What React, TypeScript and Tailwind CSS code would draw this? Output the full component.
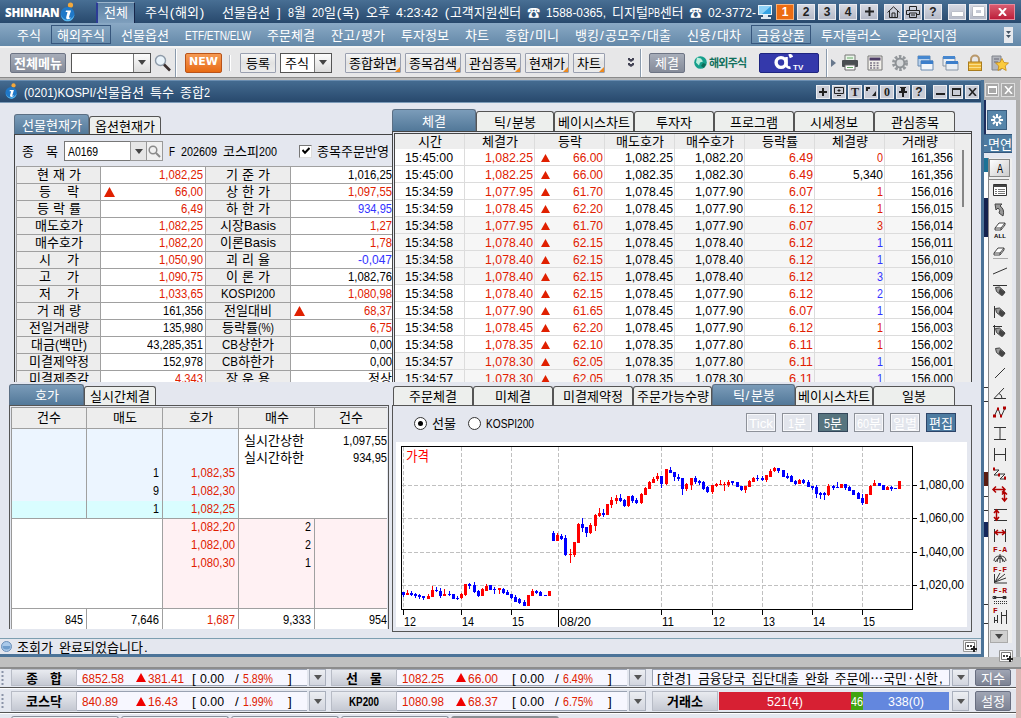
import React from "react";

const measureCtx = document.createElement("canvas").getContext("2d")!;

function naturalWidth(text: string, size: number, family: string, bold: boolean) {
  measureCtx.font = `${bold ? "bold " : ""}${size}px "${family}"`;
  return measureCtx.measureText(text).width;
}

function cellWidth(text: string, prop: boolean) {
  let w = 0;
  for (const ch of text) {
    if (ch.charCodeAt(0) > 0x7e && ch !== "·") w += 12;
    else if (!prop) w += 6;
    else if (",. ():;I".includes(ch)) w += 4;
    else if (/[A-Z%]/.test(ch)) w += 8;
    else w += 6;
  }
  return w;
}

type TProps = { children: string; prop?: boolean; bold?: boolean; className?: string };

/** Fixed-pitch label: full-width characters take 12px, half-width ones 6px. */
function T({ children, prop = false, bold = false, className = "" }: TProps) {
  const runs = children.match(/[^\x21-\x7e]+|[\x21-\x7e]+/g) || [];
  return (
    <span className={`inline-flex h-[14px] shrink-0 items-baseline pb-[2px] leading-[12px] whitespace-pre ${bold ? "font-bold" : ""} ${className}`}>
      {runs.map((r, i) => {
        const wide = !/[\x21-\x7e]/.test(r);
        const target = cellWidth(r, prop);
        const spaces = (r.match(/ /g) || []).length;
        const nat = wide
          ? naturalWidth(r, 13, "Noto Sans CJK KR", bold) + spaces * (prop ? 1.1 : 3.1)
          : naturalWidth(r, 13.5, "Liberation Sans", bold);
        const scale = wide ? target / nat : Math.min(1, target / nat);
        const cls = wide
          ? `text-[13px] font-['Noto_Sans_CJK_KR',sans-serif] ${prop ? "[word-spacing:1.1px]" : "[word-spacing:3.1px]"}`
          : "text-[13.5px] font-['Liberation_Sans',sans-serif]";
        return (
          <span key={i} className="inline-block" style={{ width: target }}>
            <span className={`inline-block origin-left leading-[12px] ${cls}`} style={{ transform: `scaleX(${scale})`, marginLeft: Math.max(0, (target - nat * scale) / 2) }}>
              {r}
            </span>
          </span>
        );
      })}
    </span>
  );
}

const RED = "text-[#e02000]";
const BLUE = "text-[#3333ff]";

function Up({ className = "" }: { className?: string }) {
  return (
    <svg className={`shrink-0 ${className}`} width="11" height="10" viewBox="0 0 11 10">
      <path d="M5.5 0L11 10H0z" fill="#e02000" />
    </svg>
  );
}

function Down({ color = "#444" }: { color?: string }) {
  return (
    <svg width="8" height="5" viewBox="0 0 8 5">
      <path d="M0 0h8L4 5z" fill={color} />
    </svg>
  );
}

function Info({ size }: { size: number }) {
  return (
    <svg width={size} height={size * 1.25} viewBox="0 0 16 20">
      <circle cx="10.5" cy="3" r="2.6" fill="#f3a83b" />
      <circle cx="7.5" cy="12" r="7" fill="#1f78c8" />
      <path d="M1 13c2 6 10 7 13.500-.5C13 22 2 21 1 13z" fill="#59b7ee" />
      <path d="M6 8.500h5L9 15c0 1 1 1 2 .2-.8 2.300-5.300 3-4.800 0L7.500 10H5.600z" fill="#fff" />
    </svg>
  );
}

/* ---------- application title ---------- */

function TopBtn({ children, className = "w-[18px]" }: { children: React.ReactNode; className?: string }) {
  return (
    <div className={`flex h-4 shrink-0 items-center justify-center border border-[#e8eaf0] bg-linear-to-b from-[#d6d9e2] to-[#b5bac8] font-['Liberation_Sans',sans-serif] text-[12px] leading-none font-bold text-[#222] ${className}`}>
      {children}
    </div>
  );
}

function TitleBar() {
  return (
    <div className="flex h-[23px] shrink-0 items-center bg-linear-to-b from-[#486f94] to-[#28496d] text-white">
      <div className="flex w-[96px] items-center pl-[5px]">
        <span className="inline-block w-[55px] pt-[3px] font-['Open_Sans',sans-serif] text-[11.500px] leading-none font-extrabold tracking-[-0.2px]">SHINHAN</span>
        <Info size={16} />
      </div>
      <div className="mt-[2px] flex h-[21px] w-[39px] items-center justify-center border-l-2 border-r border-t border-l-[#2c3b96] border-r-[#17264a] border-t-[#9bb5cc] bg-linear-to-b from-[#5b80a3] to-[#7f9fbd]">
        <T className="-mt-[3px]">전체</T>
      </div>
      <T className="ml-[10px]">주식(해외)</T>
      <T className="ml-[17px]">선물옵션 ] 8월 20일(목) 오후 4:23:42 (고객지원센터 ☎ 1588-0365, 디지털PB센터 ☎ 02-3772-</T>
      <svg className="ml-px" width="17" height="16" viewBox="0 0 17 16">
        <rect x="1" y="1" width="14" height="10" fill="#e9f4fb" />
        <rect x="2" y="2" width="12" height="8" fill="#35a3e4" />
        <path d="M2 2h12L5 10H2z" fill="#8fd2f7" />
        <path d="M6 11h5v2h3v2H4v-2h2z" fill="#dfe9f2" />
      </svg>
      <div className="ml-[2px] flex h-4 w-[18px] items-center justify-center border border-[#f7b27a] bg-[#ec6c12] font-['Liberation_Sans',sans-serif] text-[12px] font-bold">1</div>
      <TopBtn className="ml-[3px] w-[18px]">2</TopBtn>
      <TopBtn className="ml-[3px] w-[18px]">3</TopBtn>
      <TopBtn className="ml-[3px] w-[18px]">4</TopBtn>
      <TopBtn className="ml-[3px] w-[18px]">
        <svg width="9" height="9"><path d="M0 3.500h9v2H0zM3.500 0h2v9h-2z" fill="#222" /></svg>
      </TopBtn>
      <TopBtn className="ml-[6px] w-[18px]">
        <svg width="13" height="12" viewBox="0 0 13 12" fill="none" stroke="#222"><path d="M.5 6.500L6.500.8l6 5.700M2.500 5v6.500h8V5M5 11V7h3v4" /></svg>
      </TopBtn>
      <TopBtn className="ml-[2px] w-[18px]">
        <svg width="14" height="12" viewBox="0 0 14 12" fill="none" stroke="#222"><path d="M3.500 4V.5h7V4M3 8.500H.5v-4h13v4H11M3.500 7h7v4.500h-7zM5 9h4" /></svg>
      </TopBtn>
      <TopBtn className="ml-[2px] w-[18px]">?</TopBtn>
      <TopBtn className="ml-[6px] w-[18px]"><span className="mt-[4px] h-[4px] w-[11px] bg-white shadow-[0_0_1px_#666]" /></TopBtn>
      <TopBtn className="ml-[3px] w-[18px]"><span className="h-[9px] w-[11px] border-[3px] border-white shadow-[0_0_1px_#666]" /></TopBtn>
      <div className="ml-[2px] flex h-4 w-[26px] items-center justify-center border border-[#e58a9b] bg-linear-to-b from-[#d85a70] to-[#bd1b3b]">
        <svg width="9" height="8" viewBox="0 0 9 8"><path d="M1 0l7 8M8 0L1 8" stroke="#fff" strokeWidth="2" /></svg>
      </div>
    </div>
  );
}

function MenuBar() {
  const items = ["주식", "*해외주식", "선물옵션", "ETF/ETN/ELW", "주문체결", "잔고/평가", "투자정보", "차트", "종합/미니", "뱅킹/공모주/대출", "신용/대차", "*금융상품", "투자플러스", "온라인지점"];
  return (
    <div className="flex h-[23px] shrink-0 items-center gap-4 bg-linear-to-b from-[#8aa9c5] to-[#6388a8] pl-[17px] text-white">
      {items.map((m) =>
        m[0] === "*" ? (
          <div key={m} className="-mx-[6px] flex h-[19px] items-center border border-[#36567c] px-[5px]"><T>{m.slice(1)}</T></div>
        ) : (
          <T key={m}>{m}</T>
        ),
      )}
      <div className="ml-[31px] flex h-[16px] w-[9px] items-center justify-center bg-[#e6e9ee]">
        <svg width="5" height="9" viewBox="0 0 5 9"><path d="M0 1h5L2.500 4zM0 5h5L2.500 8z" fill="#456" /></svg>
      </div>
    </div>
  );
}

function Divider({ className = "" }: { className?: string }) {
  return <div className={`h-[28px] w-[2px] shrink-0 border-l border-[#8a9aac] bg-white ${className}`} />;
}

function ToolBtn({ label, className = "", corner = false }: { label: string; className?: string; corner?: boolean }) {
  return (
    <div className={`relative flex h-[20px] shrink-0 items-center justify-center rounded-[1px] border border-[#9aa0b0] bg-linear-to-b from-[#f6f6f6] via-[#e2e2e2] to-[#ececec] text-black ${className}`}>
      <T>{label}</T>
      {corner && (
        <svg className="absolute right-0 bottom-0" width="5" height="5"><path d="M5 0v5H0z" fill="#ee8a1d" /></svg>
      )}
    </div>
  );
}

function DropArrow({ className = "w-[17px]" }: { className?: string }) {
  return (
    <div className={`flex h-full shrink-0 items-center justify-center border-l border-[#777] bg-linear-to-b from-[#fdfdfd] to-[#dcdcdc] ${className}`}>
      <Down />
    </div>
  );
}

function Toolbar() {
  return (
    <div className="flex h-[31px] shrink-0 items-center border-t-2 border-[#f4f4f4] bg-[#e7e7e8] pl-[10px]">
      <div className="flex h-[20px] w-[56px] shrink-0 items-center justify-center rounded-[2px] border border-[#6d7484] bg-linear-to-b from-[#a7adb9] to-[#858b99] text-white"><T bold>전체메뉴</T></div>
      <div className="ml-[5px] flex h-[20px] w-[80px] shrink-0 items-center justify-end border border-[#555] bg-white"><DropArrow className="w-[17px]" /></div>
      <svg className="ml-[3px] shrink-0" width="18" height="18" viewBox="0 0 18 18">
        <circle cx="6.500" cy="6.500" r="5" fill="#e9f3fa" stroke="#8d9aa8" strokeWidth="1.400" />
        <path d="M10 10.500l6 6" stroke="#3b3030" strokeWidth="2.600" />
      </svg>
      <Divider className="ml-[3px]" />
      <div className="ml-[8px] flex h-[20px] w-[37px] shrink-0 items-center justify-center rounded-[2px] border border-[#b9531a] bg-linear-to-b from-[#f59a52] to-[#e86b10] font-['DejaVu_Sans',sans-serif] text-[11px] font-bold text-white">NEW</div>
      <div className="ml-[7px] h-[16px] w-[2px] border-l border-[#b4bac6] bg-white" />
      <ToolBtn className="ml-[9px] w-[36px]" label="등록" />
      <div className="ml-[4px] flex h-[20px] w-[52px] shrink-0 items-center justify-between border border-[#555] bg-white pl-[4px]"><T>주식</T><DropArrow className="w-[17px]" /></div>
      <ToolBtn className="ml-[13px] w-[56px]" label="종합화면" corner />
      <ToolBtn className="ml-[4px] w-[56px]" label="종목검색" corner />
      <ToolBtn className="ml-[4px] w-[56px]" label="관심종목" corner />
      <ToolBtn className="ml-[4px] w-[44px]" label="현재가" corner />
      <ToolBtn className="ml-[4px] w-[32px]" label="차트" corner />
      <svg className="ml-[23px] shrink-0" width="6" height="9" viewBox="0 0 6 9"><path d="M0 0h2v1h2V0h2v2L3 4 0 2zM0 5h2v1h2V5h2v2L3 9 0 7z" fill="#445" /></svg>
      <Divider className="ml-[6px]" />
      <div className="ml-[7px] flex h-[20px] w-[36px] shrink-0 items-center justify-center rounded-[2px] border border-[#6d7484] bg-linear-to-b from-[#a7adb9] to-[#858b99] text-white"><T>체결</T></div>
      <svg className="ml-[9px] shrink-0" width="13" height="13" viewBox="0 0 13 13">
        <circle cx="6.500" cy="6.500" r="6.300" fill="#16a08c" />
        <path d="M3 1.500l4 1 2 3-3 1-1 3-3-3z" fill="#bdeedd" /><path d="M9 7l3 1-2 4-3-2z" fill="#0d6b58" />
      </svg>
      <span className="ml-[2px] inline-block w-[40px] font-['Noto_Sans_CJK_KR',sans-serif] text-[11px] leading-none font-bold tracking-[-0.8px] whitespace-nowrap text-[#12705c]">해외주식</span>
      <div className="ml-[10px] flex h-[20px] w-[60px] shrink-0 items-center justify-center rounded-[2px] border border-[#1e2480] bg-[#3439ab] text-white">
        <svg width="30" height="17" viewBox="0 0 30 17">
          <circle cx="7" cy="8.500" r="4.900" fill="none" stroke="#fff" strokeWidth="3.400" />
          <path d="M12.500 3v8c0 2 2 3 4 2.500M15.500 0l1 2.500 2-1" fill="none" stroke="#fff" strokeWidth="2.600" />
          <text x="19" y="15.500" fontFamily="Liberation Sans" fontSize="8" fontWeight="bold" fill="#fff">TV</text>
        </svg>
      </div>
      <Divider className="ml-[7px]" />
      <svg className="ml-[3px] shrink-0" width="5" height="8"><path d="M0 0l5 4-5 4z" fill="#68788c" /></svg>
      <div className="ml-[5px] flex items-center gap-[7px]">
        <svg width="18" height="18" viewBox="0 0 18 18"><path d="M4 1h10v6H4z" fill="#e8f4e8" stroke="#777" /><rect x="1" y="6" width="16" height="7" rx="1" fill="#4a4e52" /><path d="M4 11h10v5H4z" fill="#fff" stroke="#666" /><path d="M6 4h6M6 13.500h6" stroke="#6a6" /></svg>
        <svg width="18" height="18" viewBox="0 0 18 18"><path d="M2 2h14v14H2z" fill="#f2f0ea" stroke="#777" /><path d="M3.500 3.500h11v3h-11z" fill="#4d3c66" /><path d="M4 9h10M4 11.500h10M4 14h10" stroke="#7b7386" strokeWidth="1.400" strokeDasharray="2 1.300" /></svg>
        <svg width="18" height="18" viewBox="0 0 18 18"><circle cx="9" cy="9" r="6.500" fill="none" stroke="#94989c" strokeWidth="3" strokeDasharray="2.600 1.500" /><circle cx="9" cy="9" r="4.400" fill="#d8dadc" stroke="#8d9195" strokeWidth="2" /></svg>
        <svg width="18" height="18" viewBox="0 0 18 18"><path d="M2 2h12v10H2z" fill="#b9d2ee" stroke="#6a8bb0" /><path d="M2 2h12v3H2z" fill="#4687cf" /><path d="M5 7h12v9H5z" fill="#f2f6fb" stroke="#6a8bb0" /><path d="M5 6.500h12V10H5z" fill="#3b7ecb" /></svg>
        <svg width="18" height="18" viewBox="0 0 18 18"><path d="M2 3h12v9H2z" fill="#e9eef4" stroke="#8795a5" /><path d="M2 2h12v3H2z" fill="#4687cf" /><path d="M5 8h12v8H5z" fill="#e9eef4" stroke="#8795a5" /><path d="M5 7h12v3H5z" fill="#3b7ecb" /></svg>
        <svg width="18" height="18" viewBox="0 0 18 18"><path d="M5 9V5.500a4 4 0 018 0V9" fill="none" stroke="#b9986a" strokeWidth="2" /><rect x="2.500" y="8" width="13" height="8.500" fill="#eeb83b" stroke="#a97c1e" /><path d="M3 10.500h12M3 13.500h12" stroke="#fbe08a" /></svg>
        <svg width="18" height="18" viewBox="0 0 18 18"><path d="M1 2h9v14H1z" fill="#b4b7bd" stroke="#80848c" /><path d="M3 5h5M3 8h4" stroke="#667" /><path d="M11 4.500l2 4 4.500.5-3.300 3 1 4.500-4.200-2.300L7 16.500l.8-4.500-3.300-3 4.500-.5z" fill="#fbcb3c" stroke="#c58a14" strokeWidth=".8" /></svg>
      </div>
    </div>
  );
}

/* ---------- inner window ---------- */

function WinBtn({ children, className = "" }: { children: React.ReactNode; className?: string }) {
  return (
    <div className={`flex h-[14px] w-[14px] shrink-0 items-center justify-center border border-[#eceef2] bg-[#c9ccd6] font-['Liberation_Serif',serif] text-[12px] leading-none font-bold text-[#222] ${className}`}>{children}</div>
  );
}

function WindowTitle() {
  return (
    <div className="flex h-[23px] shrink-0 items-center gap-[2px] border-t border-b border-t-[#6a8db0] border-b-[#7c9bb8] bg-linear-to-b from-[#446b90] to-[#28496d] pr-[2px] pl-[5px] text-white">
      <Info size={13} />
      <T className="mr-auto ml-[4px]">(0201)KOSPI/선물옵션 특수 종합2</T>
      <WinBtn><svg width="8" height="8"><path d="M0 3h8v2H0zM3 0h2v8H3z" fill="#222" /></svg></WinBtn>
      <WinBtn><svg width="10" height="9" viewBox="0 0 10 9" fill="none" stroke="#222"><path d="M.5.500h9v6h-9zM3 8.500h4M5 2v3M3.500 3.500h3" /></svg></WinBtn>
      <WinBtn>T</WinBtn>
      <WinBtn><svg width="10" height="9" viewBox="0 0 10 9" fill="#222"><path d="M0 0h4v2H2v2H0zM10 9H6l4-5z" /></svg></WinBtn>
      <WinBtn>0</WinBtn>
      <WinBtn><svg width="8" height="10" fill="#222"><path d="M1 0h6v1H6v3h2v2H5v4H3V6H0V4h2V1H1z" /></svg></WinBtn>
      <WinBtn><span className="font-['Liberation_Sans',sans-serif]">?</span></WinBtn>
      <WinBtn className="ml-[5px]"><span className="mt-[5px] h-[2px] w-[9px] bg-[#222]" /></WinBtn>
      <WinBtn><span className="h-[8px] w-[9px] border border-t-2 border-[#222]" /></WinBtn>
      <WinBtn><svg width="9" height="8"><path d="M1 0l7 8M8 0L1 8" stroke="#222" strokeWidth="1.600" /></svg></WinBtn>
    </div>
  );
}

function Tab({ label, active = false, w }: { label: string; active?: boolean; w: string }) {
  return (
    <div className={`flex shrink-0 items-center justify-center rounded-t-[3px] border border-b-0 ${w} ${active ? "h-full border-[#5b6f84] bg-linear-to-b from-[#7b9cb9] to-[#527899] text-white" : "h-[calc(100%-2px)] border-[#555] bg-[#edefed] text-black"}`}>
      <T>{label}</T>
    </div>
  );
}

const quoteRows: [string, string, string, string, string, string][] = [
  ["현 재 가", "1,082,25", "r", "기 준 가", "1,016,25", "k"],
  ["등    락", "66,00", "ru", "상 한 가", "1,097,55", "r"],
  ["등 락 률", "6,49", "r", "하 한 가", "934,95", "b"],
  ["매도호가", "1,082,25", "r", "시장Basis", "1,27", "r"],
  ["매수호가", "1,082,20", "r", "이론Basis", "1,78", "r"],
  ["시    가", "1,050,90", "r", "괴 리 율", "-0,047", "b"],
  ["고    가", "1,090,75", "r", "이 론 가", "1,082,76", "k"],
  ["저    가", "1,033,65", "r", "KOSPI200", "1,080,98", "r"],
  ["거 래 량", "161,356", "k", "전일대비", "68,37", "ru"],
  ["전일거래량", "135,980", "k", "등락률(%)", "6,75", "r"],
  ["대금(백만)", "43,285,351", "k", "CB상한가", "0,00", "k"],
  ["미결제약정", "152,978", "k", "CB하한가", "0,00", "k"],
  ["미결제증감", "4,343", "r", "장 운 용", "정상", "k"],
];

const tone = (c: string) => (c[0] === "r" ? RED : c[0] === "b" ? BLUE : "text-black");

function QuoteValue({ v, c, className }: { v: string; c: string; className: string }) {
  return (
    <div className={`flex items-center border-b border-[#a0a0a0] bg-white pb-[2px] ${className} ${tone(c)}`}>
      {c[1] === "u" && <Up className="mt-px ml-[3px]" />}
      <T prop className="ml-auto">{v}</T>
    </div>
  );
}

function QuotePanel() {
  return (
    <div className="h-[279px] pt-[11px]">
      <div className="flex h-[20px] items-end pl-[14px]">
        <Tab label="선물현재가" active w="w-[75px]" />
        <Tab label="옵션현재가" w="w-[72px]" />
      </div>
      <div className="ml-[14px] h-[248px] overflow-hidden border-t border-l border-[#444] pl-px">
        <div className="flex h-[32px] items-center pl-[6px]">
          <T>종  목</T>
          <div className="ml-[6px] flex h-[20px] w-[84px] items-center border border-[#777] bg-white pl-[3px]">
            <T>A0169</T>
          </div>
          <div className="-ml-[18px] flex h-[20px] w-[17px] items-center justify-center border border-[#999] bg-[#e6e6e6]"><Down /></div>
          <div className="flex h-[20px] w-[16px] items-center justify-center border border-l-0 border-[#999] bg-[#f0f0f0]">
            <svg width="13" height="13" viewBox="0 0 13 13" fill="none" stroke="#8a8a8a" strokeWidth="1.500"><circle cx="5" cy="5" r="3.800" /><path d="M8 8l4 4" strokeWidth="2" /></svg>
          </div>
          <T className="ml-[6px]">F 202609 코스피200</T>
          <div className="ml-[22px] flex h-[13px] w-[13px] items-center justify-center border border-t-[#777] border-r-[#ddd] border-b-[#ddd] border-l-[#777] bg-white">
            <svg width="8" height="8"><path d="M.5 3L3 5.800 7.500 1" fill="none" stroke="#000" strokeWidth="2" /></svg>
          </div>
          <T className="ml-[5px]">종목주문반영</T>
        </div>
        <div className="-mt-px border-t border-l border-[#a0a0a0]">
          {quoteRows.map((r, i) => (
            <div key={i} className="grid h-[17px] grid-cols-[84px_105px_85px_101px]">
              <div className="flex items-center justify-center border-r border-b border-[#a0a0a0] bg-[#ededed] pb-[2px]"><T prop>{r[0]}</T></div>
              <QuoteValue v={r[1]} c={r[2]} className="border-r pr-[2px]" />
              <div className="flex items-center justify-center border-r border-b border-[#a0a0a0] bg-[#ededed] pb-[2px]"><T prop>{r[3]}</T></div>
              <QuoteValue v={r[4]} c={r[5]} className="" />
            </div>
          ))}
        </div>
      </div>
    </div>
  );
}

function OrderBook() {
  const asks = [["", ""], ["", ""], ["1", "1,082,35"], ["9", "1,082,30"], ["1", "1,082,25"]];
  const bids = [["1,082,20", "2"], ["1,082,00", "2"], ["1,080,30", "1"], ["", ""], ["", ""]];
  const cell = "flex items-center justify-end border-r border-[#a0a0a0] pr-[3px] pb-[4px]";
  return (
    <div className="pt-[2px]">
      <div className="flex h-[21px] items-end pl-[9px]">
        <Tab label="호가" active w="w-[75px]" />
        <Tab label="실시간체결" w="w-[72px]" />
      </div>
      <div className="ml-[9px] h-[224px] w-[380px] overflow-hidden border-t border-r border-l border-[#555] p-px pb-0">
        <div className="h-full overflow-hidden border-t border-l border-[#999]">
          <div className="grid h-[21px] grid-cols-[75px_76px_76px_76px_72px] border-b border-[#a0a0a0] bg-[#ededed]">
            {["건수", "매도", "호가", "매수", "건수"].map((h, i) => (
              <div key={i} className={`flex items-center justify-center pb-[3px] ${i < 4 ? "border-r border-[#a0a0a0]" : ""}`}><T>{h}</T></div>
            ))}
          </div>
          <div className="flex h-[90px] border-b border-[#a0a0a0] bg-white">
            <div className="h-[89px] shrink-0 overflow-hidden">
              {asks.map((a, i) => (
                <div key={i} className={`grid h-[18px] grid-cols-[75px_76px_76px] ${i === 4 ? "bg-[#d9fdff]" : "bg-[#ecf5ff]"}`}>
                  <div className={cell} />
                  <div className={cell}><T prop>{a[0]}</T></div>
                  <div className={`${cell} ${RED}`}><T prop>{a[1]}</T></div>
                </div>
              ))}
            </div>
            <div className="w-[148px] shrink-0 pt-[2px] pl-[5px]">
              <div className="flex h-[17px] items-center justify-between"><T>실시간상한</T><T prop>1,097,55</T></div>
              <div className="flex h-[17px] items-center justify-between"><T>실시간하한</T><T prop>934,95</T></div>
            </div>
          </div>
          <div className="flex h-[90px] border-b border-[#a0a0a0] bg-white">
            <div className="w-[151px] shrink-0 border-r border-[#a0a0a0]" />
            <div className="h-[89px] shrink-0 overflow-hidden">
              {bids.map((b, i) => (
                <div key={i} className="grid h-[18px] grid-cols-[76px_76px_72px] bg-[#fff1f3]">
                  <div className={`${cell} ${RED}`}><T prop>{b[0]}</T></div>
                  <div className={cell}><T prop>{b[1]}</T></div>
                  <div />
                </div>
              ))}
            </div>
          </div>
          <div className="grid h-[20px] grid-cols-[75px_76px_76px_76px_72px] bg-white">
            {["845", "7,646", "1,687", "9,333", "954"].map((v, i) => (
              <div key={i} className={`flex items-center justify-end ${i < 4 ? "border-r border-[#a0a0a0] pr-[3px]" : ""} ${i === 2 ? RED : ""}`}><T prop>{v}</T></div>
            ))}
          </div>
        </div>
      </div>
    </div>
  );
}

const trades = `15:45:00 1,082.25 66.00 1,082.25 1,082.20 6.49 r0 161,356
15:45:00 1,082.25 66.00 1,082.35 1,082.30 6.49 k5,340 161,356
15:34:59 1,077.95 61.70 1,078.45 1,077.90 6.07 r1 156,016
15:34:59 1,078.45 62.20 1,078.45 1,077.90 6.12 r1 156,015
15:34:58 1,077.95 61.70 1,078.45 1,077.90 6.07 r3 156,014
15:34:58 1,078.40 62.15 1,078.45 1,078.40 6.12 b1 156,011
15:34:58 1,078.40 62.15 1,078.45 1,078.40 6.12 b1 156,010
15:34:58 1,078.40 62.15 1,078.45 1,078.40 6.12 b3 156,009
15:34:58 1,078.40 62.15 1,078.45 1,077.90 6.12 b2 156,006
15:34:58 1,077.90 61.65 1,078.45 1,077.90 6.07 b1 156,004
15:34:58 1,078.45 62.20 1,078.45 1,077.90 6.12 r1 156,003
15:34:58 1,078.35 62.10 1,078.35 1,077.80 6.11 r1 156,002
15:34:57 1,078.30 62.05 1,078.35 1,077.80 6.11 b1 156,001
15:34:57 1,078.30 62.05 1,078.35 1,078.30 6.11 b1 156,000`
  .split("\n")
  .map((l) => l.split(" "));

function TradePanel() {
  return (
    <div className="h-[279px] pt-[6px]">
      <div className="flex h-[22px] items-end">
        <Tab label="체결" active w="w-[84px]" />
        <Tab label="틱/분봉" w="w-[78px]" />
        <Tab label="베이시스차트" w="w-[80px]" />
        <Tab label="투자자" w="w-[80px]" />
        <Tab label="프로그램" w="w-[80px]" />
        <Tab label="시세정보" w="w-[80px]" />
        <Tab label="관심종목" w="w-[81px]" />
      </div>
      <div className="h-[251px] w-[580px] overflow-hidden border-t border-r border-l border-[#444] pt-px pl-px">
        <div className="flex h-full overflow-hidden border-t border-l border-[#444]">
          <div className="w-[560px]">
            <div className="grid h-[15px] grid-cols-8 bg-[#ededed]">
              {["시간", "체결가", "등락", "매도호가", "매수호가", "등락률", "체결량", "거래량"].map((h) => (
                <div key={h} className="flex items-center justify-center border-r border-[#dcdcdc] pb-px"><T>{h}</T></div>
              ))}
            </div>
            {trades.map((r, i) => (
              <div key={i} className={`grid h-[17px] grid-cols-8 ${Math.floor(i / 4) % 2 ? "bg-[#f6f6f6]" : "bg-white"}`}>
                {r.map((v, j) => {
                  const color = j === 6 ? tone(v) : j === 1 || j === 2 || j === 5 ? RED : "text-black";
                  return (
                    <div key={j} className={`flex items-center border-r border-b border-[#dcdcdc] pr-px pb-px ${j === 0 ? "justify-center" : "justify-end"} ${color}`}>
                      {j === 2 && (
                        <svg className="mt-[2px] mr-auto ml-[6px]" width="9" height="8"><path d="M4.500 0L9 8H0z" fill="#e02000" /></svg>
                      )}
                      <T>{j === 6 ? v.slice(1) : v}</T>
                    </div>
                  );
                })}
              </div>
            ))}
          </div>
          <div className="flex flex-1 justify-center bg-[#ededed] pt-[16px]"><div className="h-[57px] w-[2px] bg-[#858585]" /></div>
        </div>
      </div>
    </div>
  );
}

// x, body top, body bottom, wick top, wick bottom (thirds of a pixel); "r" rising, "b" falling
const candles = `40 636 645 636 651 b;52 639 645 630 645 r;64 639 645 633 648 b;76 642 648 639 654 b;88 645 651 642 657 b;100 648 654 648 660 b;115 648 657 642 657 r;127 630 651 618 651 r;139 630 633 621 636 b;151 633 648 624 654 b;163 642 648 627 648 r;178 642 645 633 648 b;190 642 657 642 657 b;202 654 657 648 660 b;214 642 654 639 657 r;226 612 645 612 648 r;238 612 618 609 627 b;253 615 636 606 639 b;265 633 648 630 651 b;277 627 648 624 648 r;289 618 633 612 633 r;301 615 630 615 630 b;313 627 630 621 642 b;328 624 630 624 642 r;340 627 639 624 642 b;352 636 645 630 645 b;364 642 654 642 657 b;376 651 666 645 666 b;388 657 669 654 672 b;403 666 678 660 678 b;415 645 678 645 678 r;427 633 648 627 648 r;439 633 639 630 642 b;451 636 648 633 648 b;466 645 648 645 648 b;478 633 648 633 648 r;490 459 483 453 483 b;502 465 483 459 483 r;514 468 477 462 480 b;526 474 525 465 528 b;541 522 525 507 549 r;553 486 525 486 531 r;565 432 489 429 489 r;577 432 444 414 456 b;589 441 459 441 471 b;601 435 459 429 462 r;616 405 438 402 453 r;628 399 408 384 411 r;640 399 405 387 411 b;652 372 405 372 405 r;664 360 375 351 384 r;679 354 363 345 372 r;691 354 363 342 366 b;703 360 378 357 381 b;715 348 378 348 381 r;727 348 363 345 369 b;739 360 369 354 372 b;754 342 369 339 372 r;766 324 345 321 345 r;778 306 327 303 327 r;790 297 309 291 309 r;802 288 297 279 303 r;814 288 312 288 324 b;829 267 312 267 315 r;841 270 279 261 279 b;853 276 291 276 303 b;865 291 297 282 303 b;877 294 327 294 345 b;889 312 327 309 333 r;904 294 315 294 330 r;916 294 306 288 312 b;928 303 309 300 315 b;940 306 327 303 330 b;952 321 336 318 339 b;967 315 336 315 342 r;979 312 318 309 321 r;991 312 315 300 315 r;1003 312 315 306 333 r;1015 306 315 300 321 r;1027 303 309 303 315 b;1042 306 321 306 321 b;1054 318 330 318 333 b;1066 318 330 318 339 r;1078 303 321 300 321 r;1090 294 306 291 306 r;1102 294 297 285 303 b;1117 294 300 288 303 b;1129 285 300 285 306 r;1141 273 291 267 291 r;1153 264 273 261 276 r;1165 264 273 264 279 b;1180 270 291 270 291 b;1192 288 294 279 297 b;1204 288 306 285 306 b;1216 303 312 300 315 b;1228 300 312 297 312 r;1240 300 309 297 312 b;1255 306 321 300 321 b;1267 318 324 318 330 b;1279 321 342 315 354 b;1291 339 345 336 357 b;1303 339 345 336 360 b;1315 318 345 312 348 r;1330 318 324 315 330 b;1342 321 324 306 324 b;1354 312 324 312 324 r;1366 312 324 312 330 b;1378 321 333 318 333 b;1390 330 345 330 345 b;1405 339 357 336 357 b;1417 354 369 342 375 b;1429 342 372 342 372 r;1441 318 345 315 345 r;1453 309 318 300 318 r;1468 309 318 309 318 b;1480 315 330 315 330 b;1492 321 330 318 330 r;1504 321 327 318 333 b;1516 324 327 324 327 b;1528 303 327 303 327 r`
  .split(";")
  .map((c) => c.split(" "));

function AxisText({ x, y, w, color = "#000", children }: { x: number; y: number; w: number; color?: string; children: string }) {
  return (
    <text x={x} y={y} textLength={w} lengthAdjust="spacingAndGlyphs" fill={color} fontSize="13.5" fontFamily="'Liberation Sans', 'Noto Sans CJK KR', sans-serif">
      {children}
    </text>
  );
}

function Chart() {
  const hours: [number, string][] = [[7, "12"], [65, "14"], [115, "15"], [265, "11"], [316, "12"], [366, "13"], [416, "14"], [466, "15"]];
  const prices: [number, string][] = [[43, "1,080,00"], [76, "1,060,00"], [110, "1,040,00"], [143, "1,020,00"]];
  return (
    <svg className="block bg-white" width="571" height="185" viewBox="0 0 571 185" shapeRendering="crispEdges">
      <g stroke="#c0c0c0" strokeDasharray="4 2">
        {prices.map(([y]) => <path key={y} d={`M6 ${y + 0.5}H516`} />)}
        {hours.map(([x]) => <path key={x} d={`M${x + 0.5} 5V167`} />)}
        <path d="M162.500 5V167" />
      </g>
      <rect x="5.500" y="4.500" width="511" height="163" fill="none" stroke="#000" />
      {candles.map(([x, t, b, h, l, c], i) => {
        const px = Math.floor(+x / 3) - 6;
        const y = (v: string) => Math.round((+v - 186) / 3);
        return (
          <g key={i} fill={c === "r" ? "#ff0000" : "#0000ff"}>
            <rect x={px} y={y(h)} width="1" height={y(l) - y(h)} />
            <rect x={px - 1} y={y(t)} width="3" height={Math.max(1, y(b) - y(t))} />
          </g>
        );
      })}
      <g stroke="#000">
        {prices.map(([y]) => <path key={y} d={`M517 ${y + 0.5}h4`} />)}
        {hours.map(([x]) => <path key={x} d={`M${x + 0.5} 168v5`} />)}
        <path d="M162.500 168v17" />
      </g>
      {prices.map(([y, s]) => <AxisText key={y} x={523} y={y + 4} w={45}>{s}</AxisText>)}
      {hours.map(([x, s]) => <AxisText key={x} x={x + 1} y={184} w={12}>{s}</AxisText>)}
      <AxisText x={164} y={184} w={31}>08/20</AxisText>
      <AxisText x={10} y={19} w={23} color="#ff0000">가격</AxisText>
    </svg>
  );
}

function PeriodBtn({ label, kind = "off" }: { label: string; kind?: "off" | "on" | "edit" }) {
  const style =
    kind === "on" ? "border-[#34475a] bg-[#56747f] text-white" : kind === "edit" ? "border-[#2d4569] bg-[#4d7ba1] text-white" : "border-[#8d9199] bg-[#e2e5ec] text-[#fff] shadow-[inset_0_0_0_1px_#f6f7fa]";
  return <div className={`flex h-[19px] w-[30px] items-center justify-center border ${style}`}><T>{label}</T></div>;
}

function ChartPanel() {
  return (
    <div className="pt-[2px]">
      <div className="flex h-[21px] items-end pl-px">
        <Tab label="주문체결" w="w-[80px]" />
        <Tab label="미체결" w="w-[80px]" />
        <Tab label="미결제약정" w="w-[80px]" />
        <Tab label="주문가능수량" w="w-[79px]" />
        <Tab label="틱/분봉" active w="w-[83px]" />
        <Tab label="베이시스차트" w="w-[78px]" />
        <Tab label="일봉" w="w-[82px]" />
      </div>
      <div className="h-[227px] w-[580px] border border-[#555] pl-[3px]">
        <div className="flex h-[36px] items-center pr-[15px] pb-[2px] pl-[18px]">
          <div className="flex h-[13px] w-[13px] items-center justify-center rounded-full border border-[#333] bg-white"><div className="h-[5px] w-[5px] rounded-full bg-black" /></div>
          <T className="ml-[5px]">선물</T>
          <div className="ml-[12px] h-[13px] w-[13px] rounded-full border border-[#333] bg-white" />
          <T className="mr-auto ml-[5px]">KOSPI200</T>
          <div className="flex gap-[6px] pb-px">
            <PeriodBtn label="Tick" />
            <PeriodBtn label="1분" />
            <PeriodBtn label="5분" kind="on" />
            <PeriodBtn label="60분" />
            <PeriodBtn label="일별" />
            <PeriodBtn label="편집" kind="edit" />
          </div>
        </div>
        <Chart />
      </div>
    </div>
  );
}

function CornerIcon() {
  return (
    <svg width="15" height="13" viewBox="0 0 15 13">
      <path d="M.5.500h13v11H.5z" fill="#f7f7f7" stroke="#999" /><path d="M2.500 2.500h9v7h-9z" fill="#fff" stroke="#777" />
      <path d="M4 5h2v2H4zM7 5h2v2H7z" fill="#444" /><path d="M8 9h6M11 6v6" stroke="#222" strokeWidth="2" />
    </svg>
  );
}

function MainWindow() {
  return (
    <div className="flex h-[577px] w-[984px] shrink-0 flex-col border-r-[3px] border-b-[3px] border-[#4b7398] bg-[#e4e7ef]">
      <WindowTitle />
      <div className="flex h-[535px] shrink-0">
        <div className="w-[392px] shrink-0"><QuotePanel /><OrderBook /></div>
        <div className="w-[589px] shrink-0"><TradePanel /><ChartPanel /></div>
      </div>
      <div className="flex h-[16px] shrink-0 items-center border-t border-[#7d9fb1] pr-[3px] pl-px">
        <svg width="11" height="11"><circle cx="5.500" cy="5.500" r="5" fill="#a9c9ea" stroke="#6b8fb8" /><path d="M1.500 5h8a4 3.500 0 01-8 0z" fill="#6f9dcc" /></svg>
        <T className="mr-auto ml-[5px]">조회가 완료되었습니다.</T>
        <CornerIcon />
      </div>
    </div>
  );
}

/* ---------- drawing tool strip ---------- */

const eraser = <path d="M5 12l4-5h6l-4 5zM5 12v2h6v-2M11 14l4-5V7" fill="#fff" stroke="#444" />;
const pencil = (
  <>
    <path d="M6.500 6.500l4-.5 5.500 5-3.500 3.500-5-4z" fill="#9b9b9b" stroke="#444" />
    <path d="M11 7.500l5.500 4-3 3.500-4-3.500z" fill="#444" />
  </>
);
const fib = (s: string) => <text x="4" y="7" fontFamily="Liberation Mono" fontSize="8" fontWeight="bold" fill="#a80000" textLength={s.length * 4.7}>{s}</text>;
const L = { fill: "none", stroke: "#333" };
const R = { fill: "none", stroke: "#b00000", strokeWidth: 1.5 };

const tools: React.ReactNode[] = [
  <><path d="M4.500 4.500h13v11h-13z" fill="#fff" stroke="#333" /><path d="M4 5h14v2H4z" fill="#444" /><path d="M6 9.500h2M9 9.500h7M6 11.500h2M9 11.500h7M6 13.500h2M9 13.500h7" {...L} stroke="#777" /></>,
  <path d="M6 4h7l-2 2q5 3 3 10l-4-3q2-3-1-5l-2 2z" fill="#999" stroke="#444" />,
  <><g transform="translate(1 -5)">{eraser}</g><text x="5" y="17" fontFamily="Liberation Sans" fontSize="6" fontWeight="bold" textLength="12">ALL</text></>,
  <>{eraser}<path d="M4 17.500h15" stroke="#aaa" /></>,
  <path d="M4 13l14-6" {...L} />,
  <><path d="M4 4.500h14" {...L} />{pencil}</>,
  <><path d="M5.500 4v12" {...L} />{pencil}</>,
  <><path d="M4 4.500h9M5.500 3v10" {...L} />{pencil}</>,
  pencil,
  <path d="M6 15L16 5" {...L} />,
  <path d="M15 5L5 15.500h12M10 10.500q3 1 3 5" {...L} />,
  <><path d="M5 14l4-9 3 9 4-9" {...L} /><path d="M4 13h3M8 6h2M11 13h2M14 5h3" {...R} strokeWidth={3} /></>,
  <path d="M5 4.500h12M11 5v11M5 16.500h12" {...L} />,
  <path d="M5.500 4v13M16.500 4v13M5 10.500h12" {...L} />,
  <><path d="M5 6h5l-5 5h5M10 10h6l-5 5h6" {...L} /><path d="M4 5h2M9 11h2M15 14h2" {...R} strokeWidth={3} /></>,
  <><path d="M4 5.500h12M7 2.500L4 5.500l3 3M13 2.500l3 3-3 3M15.500 8v9M13 10.500l2.500-2.500 2.500 2.500M13 14l2.500 3 2.500-3" {...R} /></>,
  <><path d="M5 4.500h13M5 15.500h13" {...L} /><path d="M7.500 5v10M5 8l2.500-3L10 8M5 12l2.500 3L10 12" {...R} /></>,
  <><path d="M5.500 4v13M16.500 4v13" {...L} /><path d="M6 7.500h10M9 5L6 7.500 9 10M13 5l3 2.500-3 2.500" {...R} /></>,
  <>{fib("F-A")}<path d="M5 16q0-5 6-5t6 5M8 17q0-4 3-4t3 4M11 9v9M11 11l-5 6M11 11l5 6" {...L} /></>,
  <>{fib("F-F")}<path d="M5.500 9v9H18M6 17L16 9M6 17l5-9M6 17l11-4" {...L} /></>,
  <>{fib("F-R")}<path d="M5 11.500h12" {...L} /><path d="M5 15.500h13M5 17.500h13" {...L} strokeDasharray="1 1" /><path d="M4 10.500h3v2H4zM14 10.500h3v2h-3z" {...L} /></>,
  <>{fib("F")}<path d="M5.500 11v6M5 14.500h3M8.500 9v8M12.500 6v12M17.500 4v14M12 9.500h6" {...L} /></>,
];

function SideStrip() {
  return (
    <div className="flex h-[577px] w-[37px] shrink-0 flex-col border-r border-[#efd9da]">
      <div className="flex h-[20px] shrink-0 items-center gap-[2px] bg-[#b4b4b4] pl-px">
        <div className="flex h-[14px] w-[14px] items-center justify-center border border-[#ddd] bg-[#a8a8a8]"><span className="h-[8px] w-[9px] border border-t-2 border-white" /></div>
        <div className="flex h-[14px] w-[14px] items-center justify-center border border-[#ddd] bg-[#a8a8a8]"><svg width="9" height="8"><path d="M1 0l7 8M8 0L1 8" stroke="#fff" strokeWidth="1.600" /></svg></div>
      </div>
      <div className="flex min-h-0 flex-1 border-r-[4px] border-[#adadad] bg-[#e4e7ef]">
        <div className="flex min-h-0 flex-1 flex-col">
          <div className="flex h-[34px] shrink-0 items-center border-l-2 border-[#1c2c5c] pt-[6px] pl-px">
            <div className="flex h-[20px] w-[20px] items-center justify-center border border-[#385b7d] bg-[#5685aa]">
              <svg width="12" height="12" viewBox="0 0 12 12" stroke="#fff" strokeWidth="2"><path d="M6 0v12M0 6h12M2 2l8 8M10 2l-8 8" /><circle cx="6" cy="6" r="1" fill="#5685aa" stroke="#5685aa" /></svg>
            </div>
          </div>
          <div className="flex h-[19px] w-[28px] shrink-0 items-center justify-end overflow-hidden border-y border-[#34587e] bg-[#4d7ba1] text-white"><T>-면연</T></div>
          <div className="flex min-h-0 flex-1 pt-[5px]">
            <div className="flex w-[5px] flex-col border-r border-[#888] bg-white">
              <div className="h-[14px] bg-[#1c7296]" />
              <div className="mt-[14px] h-[12px]" />
              <div className="h-[39px] bg-[#14224e]" />
              <div className="mt-[150px] h-[15px] border-y border-[#333]" />
              <div className="mt-[70px] h-[14px] bg-[#5a1c10]" />
              <div className="mt-[10px] h-[15px] border-y border-[#333]" />
              <div className="mt-[11px] h-[15px] bg-[#14275a]" />
              <div className="mt-[67px] h-[20px] border-y border-[#333]" />
            </div>
            <div className="flex h-[485px] w-[23px] flex-col bg-[#efefef]">
              <div className="mt-px flex h-[18px] w-[21px] shrink-0 items-center justify-center border border-[#888] bg-linear-to-br from-white to-[#ccc]"><T>A</T></div>
              <div className="mt-[2px] h-px w-[20px] shrink-0 bg-[#888]" />
              <div className="flex min-h-0 flex-1 flex-col justify-between">
                {tools.map((t, i) => <svg key={i} className="-mb-[4px] shrink-0" width="22" height="20" viewBox="0 0 22 20" overflow="visible">{t}</svg>)}
              </div>
              <div className="mt-[8px] ml-px flex h-[13px] w-[18px] shrink-0 items-center justify-center border border-[#aaa] bg-[#d0d0d0]"><Down /></div>
            </div>
          </div>
        </div>
      </div>
    </div>
  );
}

/* ---------- tickers ---------- */

function Label({ text }: { text: string }) {
  return <div className="flex h-full w-[66px] items-center justify-center border border-[#b8bcc6] bg-linear-to-b from-[#e9ebf0] to-[#c5c9d3]"><T bold>{text}</T></div>;
}

function Arrow() {
  return <div className="ml-[2px] flex h-full w-[17px] items-center justify-center border border-[#aab0bd] bg-linear-to-b from-[#eceef2] to-[#d2d5de]"><Down color="#555" /></div>;
}

function IndexCell({ name, v, d, p }: { name: string; v: string; d: string; p: string }) {
  return (
    <div className="flex h-full w-[315px] items-center">
      <Label text={name} />
      <div className="flex h-full w-[231px] items-center border-y border-[#9aa2b2] bg-[#f7f7ff] pl-[5px]">
        <div className={`flex w-[54px] ${RED}`}><T>{v}</T></div>
        <svg width="10" height="9"><path d="M5 0l5 9H0z" fill="#f00000" /></svg>
        <div className={`ml-[2px] flex w-[43px] ${RED}`}><T>{d}</T></div>
        <div className="flex w-[43px]"><T>[</T><T className="ml-[3px]">0.00</T></div>
        <T className="w-[9px]">/</T>
        <div className={`flex w-[44px] ${RED}`}><T>{p}</T></div>
        <T>]</T>
      </div>
      <Arrow />
    </div>
  );
}

function GrayBtn({ label }: { label: string }) {
  return <div className="ml-[6px] flex h-full w-[36px] items-center justify-center rounded-[2px] border border-[#686e80] bg-linear-to-b from-[#a0a5b4] to-[#7c8293] text-white"><T>{label}</T></div>;
}

function Handle() {
  return (
    <svg className="shrink-0" width="11" height="16"><path d="M2.500 1v15" stroke="#8a93a8" strokeWidth="2" strokeDasharray="2 2" /></svg>
  );
}

function Tickers() {
  return (
    <div className="h-[49px] shrink-0 overflow-hidden border-r-[5px] border-[#d9b9b5] bg-[#e4e7ef]">
      <div className="flex h-[17px] items-center">
        <Handle />
        <IndexCell name="종  합" v="6852.58" d="381.41" p="5.89%" />
        <div className="w-[5px]" />
        <IndexCell name="선  물" v="1082.25" d="66.00" p="6.49%" />
        <div className="ml-[6px] flex h-full w-[298px] items-center overflow-hidden border border-[#9aa2b2] bg-[#f7f7ff] pl-[3px]"><T>[한경] 금융당국 집단대출 완화 주문에…국민·신한,</T></div>
        <Arrow />
        <GrayBtn label="지수" />
      </div>
      <div className="mt-px h-[2px] border-b border-white bg-[#555]" />
      <div className="mt-[2px] flex h-[20px] items-center">
        <Handle />
        <IndexCell name="코스닥" v="840.89" d="16.43" p="1.99%" />
        <div className="w-[5px]" />
        <IndexCell name="KP200" v="1080.98" d="68.37" p="6.75%" />
        <div className="ml-[6px] flex h-full w-[298px] items-center">
          <Label text="거래소" />
          <div className="ml-px flex h-[18px] w-[132px] items-center justify-center bg-[#d72033] text-white"><T>521(4)</T></div>
          <div className="flex h-[18px] w-[12px] items-center justify-center bg-[#41a411] text-white"><T>46</T></div>
          <div className="flex h-[18px] w-[86px] items-center justify-center bg-[#6387de] text-white"><T>338(0)</T></div>
        </div>
        <Arrow />
        <GrayBtn label="설정" />
      </div>
      <div className="mt-px h-[2px] border-b border-white bg-[#555]" />
      <div className="mt-[2px] flex h-[3px] gap-[2px] pl-[11px]">
        <div className="w-[108px] rounded-t border border-b-0 border-[#8a8f9a] bg-[#f0f1f4]" />
        <div className="w-[108px] rounded-t border border-b-0 border-[#8a8f9a] bg-[#f0f1f4]" />
        <div className="w-[108px] rounded-t border border-b-0 border-[#8a8f9a] bg-[#f0f1f4]" />
        <div className="w-[108px] rounded-t border border-b-0 border-[#8a8f9a] bg-[#f0f1f4]" />
        <div className="w-[108px] rounded-t bg-[#8a8d92]" />
      </div>
    </div>
  );
}

export default function App() {
  return (
    <div className="flex h-[718px] w-[1021px] flex-col overflow-hidden bg-[#c0c0c0] text-black">
      <TitleBar />
      <MenuBar />
      <Toolbar />
      <div className="h-[3px] shrink-0 border-t border-[#8a8a8a] bg-[#b8b8b8]" />
      <div className="flex h-[577px] shrink-0">
        <MainWindow />
        <SideStrip />
      </div>
      <div className="flex h-[12px] shrink-0 items-start justify-end border-b-2 border-[#8c8c8c] bg-[#c0c0c0] pr-[7px]"><div className="-mt-[7px]"><CornerIcon /></div></div>
      <Tickers />
    </div>
  );
}
